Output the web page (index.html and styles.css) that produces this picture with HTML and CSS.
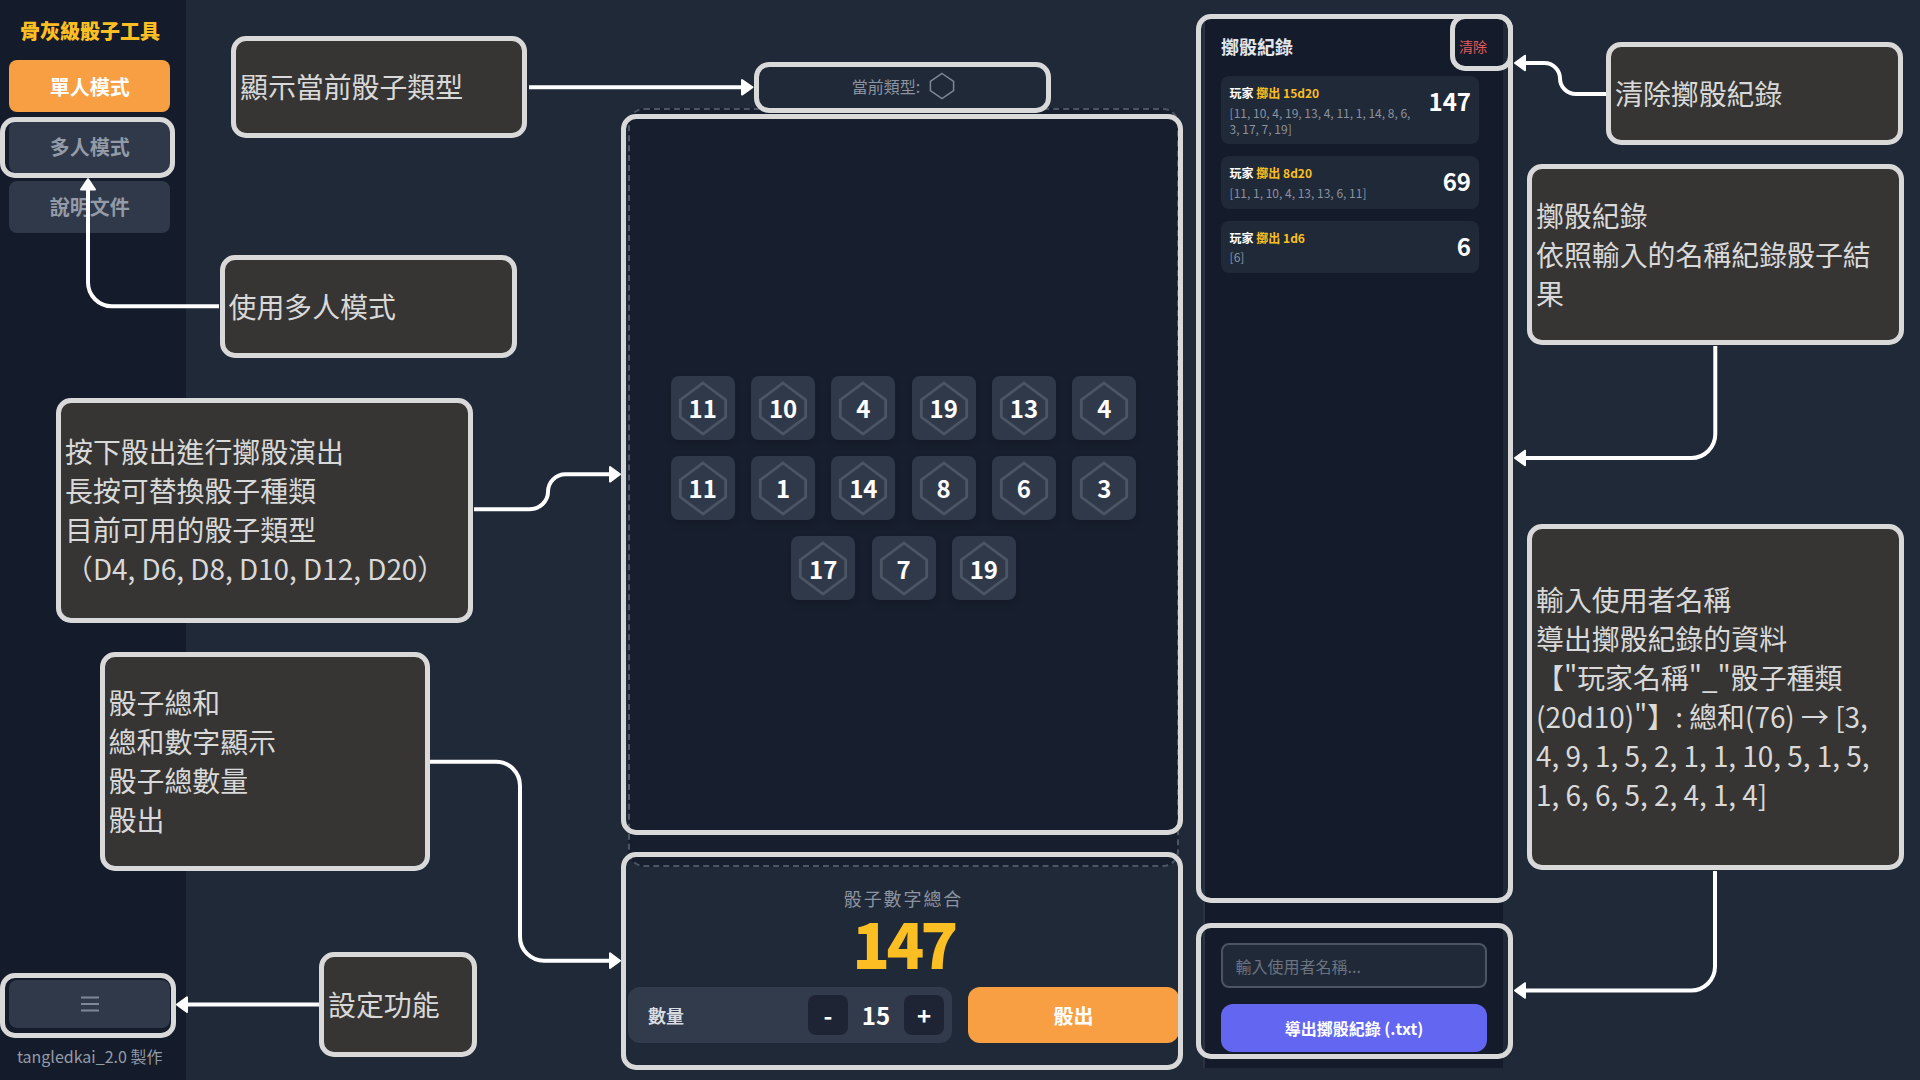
FILE: index.html
```html
<!DOCTYPE html>
<html lang="zh-Hant">
<head>
<meta charset="utf-8">
<title>骨灰級骰子工具</title>
<link rel="stylesheet" href="styles.css">
</head>
<body>
<svg class="defs" width="0" height="0" aria-hidden="true">
  <symbol id="hex" viewBox="0 0 52 58"><path d="M26 4 L48.7 21 V38 L26 55 L3.3 38 V21 Z" fill="none" stroke="currentColor" stroke-width="2.8"/></symbol>
</svg>
<div class="app">
  <aside class="sidebar">
    <h1 class="brand">骨灰級骰子工具</h1>
    <nav class="nav">
      <button class="nav-btn active">單人模式</button>
      <button class="nav-btn">多人模式</button>
      <button class="nav-btn">說明文件</button>
    </nav>
    <button class="settings">
      <svg width="18" height="16" viewBox="0 0 18 16"><path d="M0 1.5H18M0 8H18M0 14.5H18" stroke="#7f8896" stroke-width="1.8"/></svg>
    </button>
    <p class="credit">tangledkai_2.0 製作</p>
  </aside>

  <main class="stage">
    <div class="current">
      <span>當前類型:</span>
      <svg width="26" height="28" viewBox="0 0 26 28"><path d="M13 1.5 L24.6 9.5 V18.6 L13 26.5 L1.4 18.6 V9.5 Z" fill="none" stroke="#7f8896" stroke-width="1.5"/></svg>
    </div>
    <section class="tray">
      <div class="dice-row">
        <div class="die"><svg><use href="#hex"/></svg><b>11</b></div>
        <div class="die"><svg><use href="#hex"/></svg><b>10</b></div>
        <div class="die"><svg><use href="#hex"/></svg><b>4</b></div>
        <div class="die"><svg><use href="#hex"/></svg><b>19</b></div>
        <div class="die"><svg><use href="#hex"/></svg><b>13</b></div>
        <div class="die"><svg><use href="#hex"/></svg><b>4</b></div>
      </div>
      <div class="dice-row">
        <div class="die"><svg><use href="#hex"/></svg><b>11</b></div>
        <div class="die"><svg><use href="#hex"/></svg><b>1</b></div>
        <div class="die"><svg><use href="#hex"/></svg><b>14</b></div>
        <div class="die"><svg><use href="#hex"/></svg><b>8</b></div>
        <div class="die"><svg><use href="#hex"/></svg><b>6</b></div>
        <div class="die"><svg><use href="#hex"/></svg><b>3</b></div>
      </div>
      <div class="dice-row">
        <div class="die"><svg><use href="#hex"/></svg><b>17</b></div>
        <div class="die"><svg><use href="#hex"/></svg><b>7</b></div>
        <div class="die"><svg><use href="#hex"/></svg><b>19</b></div>
      </div>
    </section>
    <section class="total">
      <div class="total-label">骰子數字總合</div>
      <div class="total-value">147</div>
    </section>
    <div class="controls">
      <div class="quantity">
        <span class="quantity-label">數量</span>
        <button class="step">-</button>
        <span class="quantity-value">15</span>
        <button class="step">+</button>
      </div>
      <button class="roll">骰出</button>
    </div>
  </main>

  <aside class="history">
    <header class="history-head"><h2>擲骰紀錄</h2><button class="clear">清除</button></header>
    <ul class="log">
      <li class="entry"><div><p class="who">玩家 <em>擲出 15d20</em></p><p class="rolls">[11, 10, 4, 19, 13, 4, 11, 1, 14, 8, 6,<br>3, 17, 7, 19]</p></div><strong>147</strong></li>
      <li class="entry"><div><p class="who">玩家 <em>擲出 8d20</em></p><p class="rolls">[11, 1, 10, 4, 13, 13, 6, 11]</p></div><strong>69</strong></li>
      <li class="entry"><div><p class="who">玩家 <em>擲出 1d6</em></p><p class="rolls">[6]</p></div><strong>6</strong></li>
    </ul>
    <input class="name" type="text" placeholder="輸入使用者名稱...">
    <button class="export">導出擲骰紀錄 (.txt)</button>
  </aside>
</div>

<div class="notes">
  <div class="frame f-multi"></div>
  <div class="frame f-settings"></div>
  <div class="frame f-type"></div>
  <div class="frame f-tray"></div>
  <div class="frame f-total"></div>
  <div class="frame f-history"></div>
  <div class="frame f-clear"></div>
  <div class="frame f-export"></div>

  <div class="frame note n-type">顯示當前骰子類型</div>
  <div class="frame note n-multi">使用多人模式</div>
  <div class="frame note n-roll">按下骰出進行擲骰演出<br>長按可替換骰子種類<br>目前可用的骰子類型<br>（D4, D6, D8, D10, D12, D20）</div>
  <div class="frame note n-total">骰子總和<br>總和數字顯示<br>骰子總數量<br>骰出</div>
  <div class="frame note n-settings">設定功能</div>
  <div class="frame note n-clear">清除擲骰紀錄</div>
  <div class="frame note n-history">擲骰紀錄<br>依照輸入的名稱紀錄骰子結<br>果</div>
  <div class="frame note n-export">輸入使用者名稱<br>導出擲骰紀錄的資料<br>【"玩家名稱"_"骰子種類<br>(20d10)"】: 總和(76) → [3,<br>4, 9, 1, 5, 2, 1, 1, 10, 5, 1, 5,<br>1, 6, 6, 5, 2, 4, 1, 4]</div>

  <svg class="arrows" width="1920" height="1080" viewBox="0 0 1920 1080">
    <g fill="none" stroke="#fff" stroke-width="4">
      <path d="M529 87.3H744"/>
      <path d="M219 306.3H112A24 24 0 0 1 88 282.3V188"/>
      <path d="M474 509.3H529A19 17.5 0 0 0 548 491.8A17.5 17.5 0 0 1 565.5 474.3H611"/>
      <path d="M430 761.7H496A24 24 0 0 1 520 785.7V936.7A24 24 0 0 0 544 960.7H611"/>
      <path d="M319 1004.6H186"/>
      <path d="M1606 94H1576A16 15.5 0 0 1 1560 78.5A15.5 15.5 0 0 0 1544.5 63H1524"/>
      <path d="M1715.3 346V434A24 24 0 0 1 1691.3 458H1524"/>
      <path d="M1715 871V966.5A24 24 0 0 1 1691 990.5H1524"/>
    </g>
    <g fill="#fff" stroke="#fff" stroke-width="2" stroke-linejoin="round">
      <path d="M752.5 87.3L742 80V94.6Z"/>
      <path d="M88 179L81 189.5H95Z"/>
      <path d="M620 474.3L610 467V481.6Z"/>
      <path d="M620 960.7L610 953.4V968Z"/>
      <path d="M177 1004.6L187 997.3V1011.9Z"/>
      <path d="M1515 63L1525 55.7V70.3Z"/>
      <path d="M1515 458L1525 450.7V465.3Z"/>
      <path d="M1515 990.5L1525 983.2V997.8Z"/>
    </g>
  </svg>
</div>
</body>
</html>
```
FILE: styles.css
```css
* { box-sizing: border-box; margin: 0; padding: 0; }
body {
  width: 1920px; height: 1080px; overflow: hidden;
  background: #202937; color: #fff;
  font-family: "Noto Sans CJK TC", "Noto Sans", sans-serif;
}
button { border: 0; font: inherit; color: inherit; }
ul { list-style: none; }
.defs { position: absolute; }

.app { display: grid; grid-template-columns: 186px 1017px 300px; height: 1080px; }

.sidebar { display: flex; flex-direction: column; background: #141b2a; padding: 16px 16px 11px 9.4px; }
.brand { font-size: 20px; line-height: 30px; font-weight: 900; color: #fbbf24; text-align: center; width: 161px; }
.nav { display: flex; flex-direction: column; gap: 8.4px; margin-top: 14.2px; flex: 1; }
.nav-btn { height: 52px; border-radius: 8px; background: #303949; color: #939ba8; font-size: 20px; font-weight: 700; }
.nav-btn.active { background: #f79f42; color: #fff; }
.settings { display: flex; align-items: center; justify-content: center; height: 48px; border-radius: 8px; background: #303949; }
.credit { margin-top: 15px; height: 26px; line-height: 26px; font-size: 16px; color: #939ba8; text-align: center; white-space: nowrap; }

.stage { display: flex; flex-direction: column; margin-left: 442px; width: 551px; }
.current { display: flex; align-items: center; justify-content: center; gap: 9px; height: 108.4px; padding: 64px 0 0; font-size: 16px; color: #8b93a1; }
.tray { display: flex; flex-direction: column; align-items: center; justify-content: center; gap: 16.3px; height: 759px; border: 2px dashed #4b5563; border-radius: 16px; background: #171e2d; }
.dice-row { display: flex; gap: 16.3px; }
.die { display: grid; place-items: center; width: 64px; height: 64px; border-radius: 8px; background: #303949; box-shadow: 0 4px 6px rgba(0,0,0,.15); }
.die svg { grid-area: 1 / 1; width: 52px; height: 58px; color: #4b5563; }
.die b { grid-area: 1 / 1; font-size: 24px; line-height: 32px; padding-top: 1px; }
.total { text-align: center; padding-top: 16.6px; height: 120px; }
.total-label { font-size: 18px; line-height: 28px; letter-spacing: 1.9px; color: #8b93a1; }
.total-value { font-size: 62px; line-height: 60px; font-weight: 900; letter-spacing: -3.6px; color: #fbbf24; }
.controls { display: flex; gap: 16px; height: 56px; }
.quantity { display: flex; align-items: center; width: 324px; padding: 0 8px 0 20px; border-radius: 12px; background: #323b4b; }
.quantity-label { flex: 1; font-size: 18px; font-weight: 700; color: #d8dce2; }
.quantity-value { width: 56px; text-align: center; font-size: 24px; font-weight: 700; line-height: 40px; }
.step { width: 40px; height: 40px; border-radius: 8px; background: #1e2433; font-size: 24px; line-height: 40px; font-weight: 700; }
.roll { flex: 1; border-radius: 12px; background: #f79f42; font-size: 20px; font-weight: 700; }

.history { display: flex; flex-direction: column; margin-top: 16px; height: 1052px; padding: 14px 16px 16px; border-left: 2px solid #2a3343; background: #141b2a; }
.history-head { display: flex; align-items: center; justify-content: space-between; height: 32px; }
.history-head h2 { font-size: 18px; font-weight: 700; color: #e2e5ea; }
.clear { background: none; font-size: 14px; color: #e25c5f; }
.log { display: flex; flex-direction: column; gap: 12px; width: 258px; margin-top: 14px; flex: 1; }
.entry { display: flex; justify-content: space-between; padding: 8px 8px 7.4px 8.6px; border-radius: 8px; background: #202937; }
.who { font-size: 12px; line-height: 17px; font-weight: 700; }
.who em { font-style: normal; color: #fbbf24; }
.rolls { margin-top: 3.6px; font-size: 12px; line-height: 16.2px; color: #8b93a1; white-space: nowrap; }
.entry strong { font-size: 24px; line-height: 34px; }
.name { height: 45px; border: 2px solid #4b5563; border-radius: 8px; background: #202937; padding: 0 12.5px; font: 16px "Noto Sans CJK TC", sans-serif; color: #fff; }
.name::placeholder { color: #6b7280; opacity: 1; }
.export { height: 48px; margin-top: 16px; border-radius: 12px; background: #6366f1; font-size: 16px; font-weight: 700; }

/* Tutorial overlay: highlight frames, notes and connectors placed over the app */
.notes { position: absolute; inset: 0; width: 1920px; height: 1080px; }
.arrows { position: absolute; left: 0; top: 0; }
.frame { position: absolute; border: 5px solid #d9d9d9; border-radius: 15px; }
.note { align-content: center; padding: 0 0 1px 4px; background: #363533; color: #d9d9d9; font-size: 27.9px; line-height: 39px; white-space: nowrap; }
.f-multi { left: 0; top: 117px; width: 175px; height: 61px; }
.f-settings { left: 0; top: 972.5px; width: 176px; height: 65px; }
.f-type { left: 753.5px; top: 62px; width: 297.5px; height: 51px; }
.f-tray { left: 621px; top: 113.5px; width: 562px; height: 721.5px; }
.f-total { left: 621px; top: 852px; width: 562px; height: 218px; }
.f-history { left: 1196px; top: 13.5px; width: 317px; height: 889px; }
.f-clear { left: 1450px; top: 13.5px; width: 63px; height: 57px; }
.f-export { left: 1196px; top: 923px; width: 317px; height: 136px; }
.n-type { left: 231px; top: 36px; width: 296.4px; height: 102px; }
.n-multi { left: 219.5px; top: 255px; width: 297px; height: 103px; }
.n-roll { left: 56px; top: 397.6px; width: 417px; height: 225px; }
.n-total { left: 99.6px; top: 652.4px; width: 330px; height: 219px; }
.n-settings { left: 319px; top: 952px; width: 158px; height: 105px; }
.n-clear { left: 1606px; top: 42px; width: 297px; height: 103px; }
.n-history { left: 1527px; top: 164px; width: 377px; height: 181px; }
.n-export { left: 1527px; top: 524px; width: 377px; height: 346px; }
```
